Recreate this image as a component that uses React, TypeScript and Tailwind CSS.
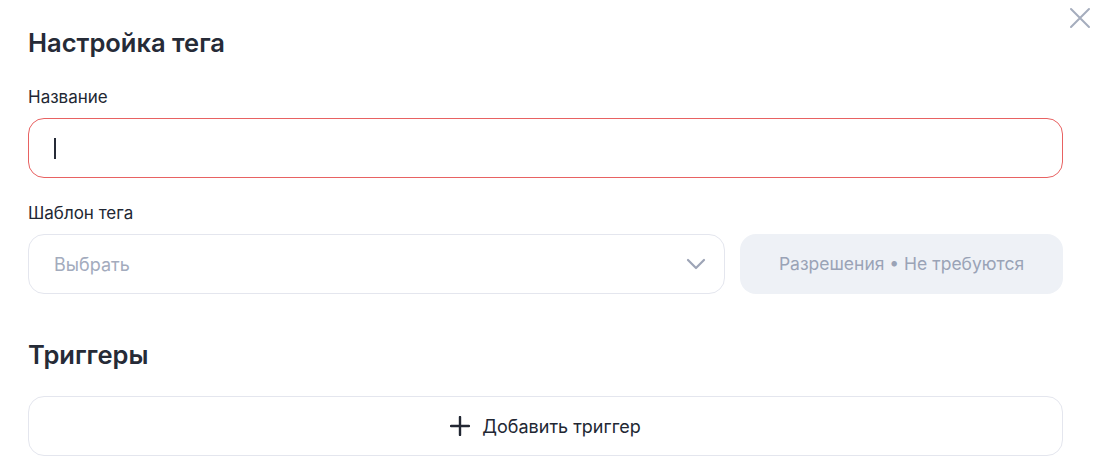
const font = { fontFamily: 'Inter, "Noto Sans", sans-serif' }

export default function App() {
  return (
    <div className="relative w-[1098px] h-[470px] bg-white text-[#222733]" style={font}>
      {/* close button */}
      <button className="absolute left-[1069px] top-[7px] text-[#a5adbd]">
        <svg width="22" height="22" viewBox="0 0 22 22" fill="none" stroke="currentColor" strokeWidth="2" strokeLinecap="round">
          <path d="M2 2 L20 20 M20 2 L2 20" />
        </svg>
      </button>

      <div className="w-[1035px] ml-7 pt-[27px]">
        <h2 className="text-[25.5px] leading-8 font-semibold text-[#262b37]">Настройка тега</h2>

        {/* name */}
        <div className="mt-[26px] text-[17px] leading-6">Название</div>
        <div className="mt-[9px] h-[60px] rounded-2xl border border-[#e86262] flex items-center pl-[25px]">
          <div className="w-[2px] h-[21px] bg-[#262b37]" />
        </div>

        {/* template */}
        <div className="mt-[23px] text-[17px] leading-6">Шаблон тега</div>
        <div className="mt-[9px] flex gap-[15px]">
          <div className="flex-1 h-[60px] rounded-2xl border border-[#e4e6ee] flex items-center justify-between pl-[25px] pr-[18px]">
            <span className="text-[18px] text-[#a3abbd]">Выбрать</span>
            <svg width="20" height="12" viewBox="0 0 20 12" fill="none" stroke="#9da4b6" strokeWidth="2.2" strokeLinecap="round" strokeLinejoin="round">
              <path d="M2 2 L10 10 L18 2" />
            </svg>
          </div>
          <div className="w-[323px] h-[60px] rounded-2xl bg-[#eef1f6] flex items-center justify-center text-[17.5px] text-[#9aa3b6]">
            Разрешения • Не требуются
          </div>
        </div>

        {/* triggers */}
        <h2 className="mt-[45px] text-[25.5px] leading-8 font-semibold text-[#262b37]">Триггеры</h2>
        <button className="mt-[25px] w-full h-[60px] rounded-2xl border border-[#e4e6ee] flex items-center justify-center gap-[12px] text-[18px] text-[#222733]">
          <svg width="20" height="20" viewBox="0 0 20 20" fill="none" stroke="currentColor" strokeWidth="2.4" strokeLinecap="round">
            <path d="M10 1 V19 M1 10 H19" />
          </svg>
          Добавить триггер
        </button>
      </div>
    </div>
  )
}
